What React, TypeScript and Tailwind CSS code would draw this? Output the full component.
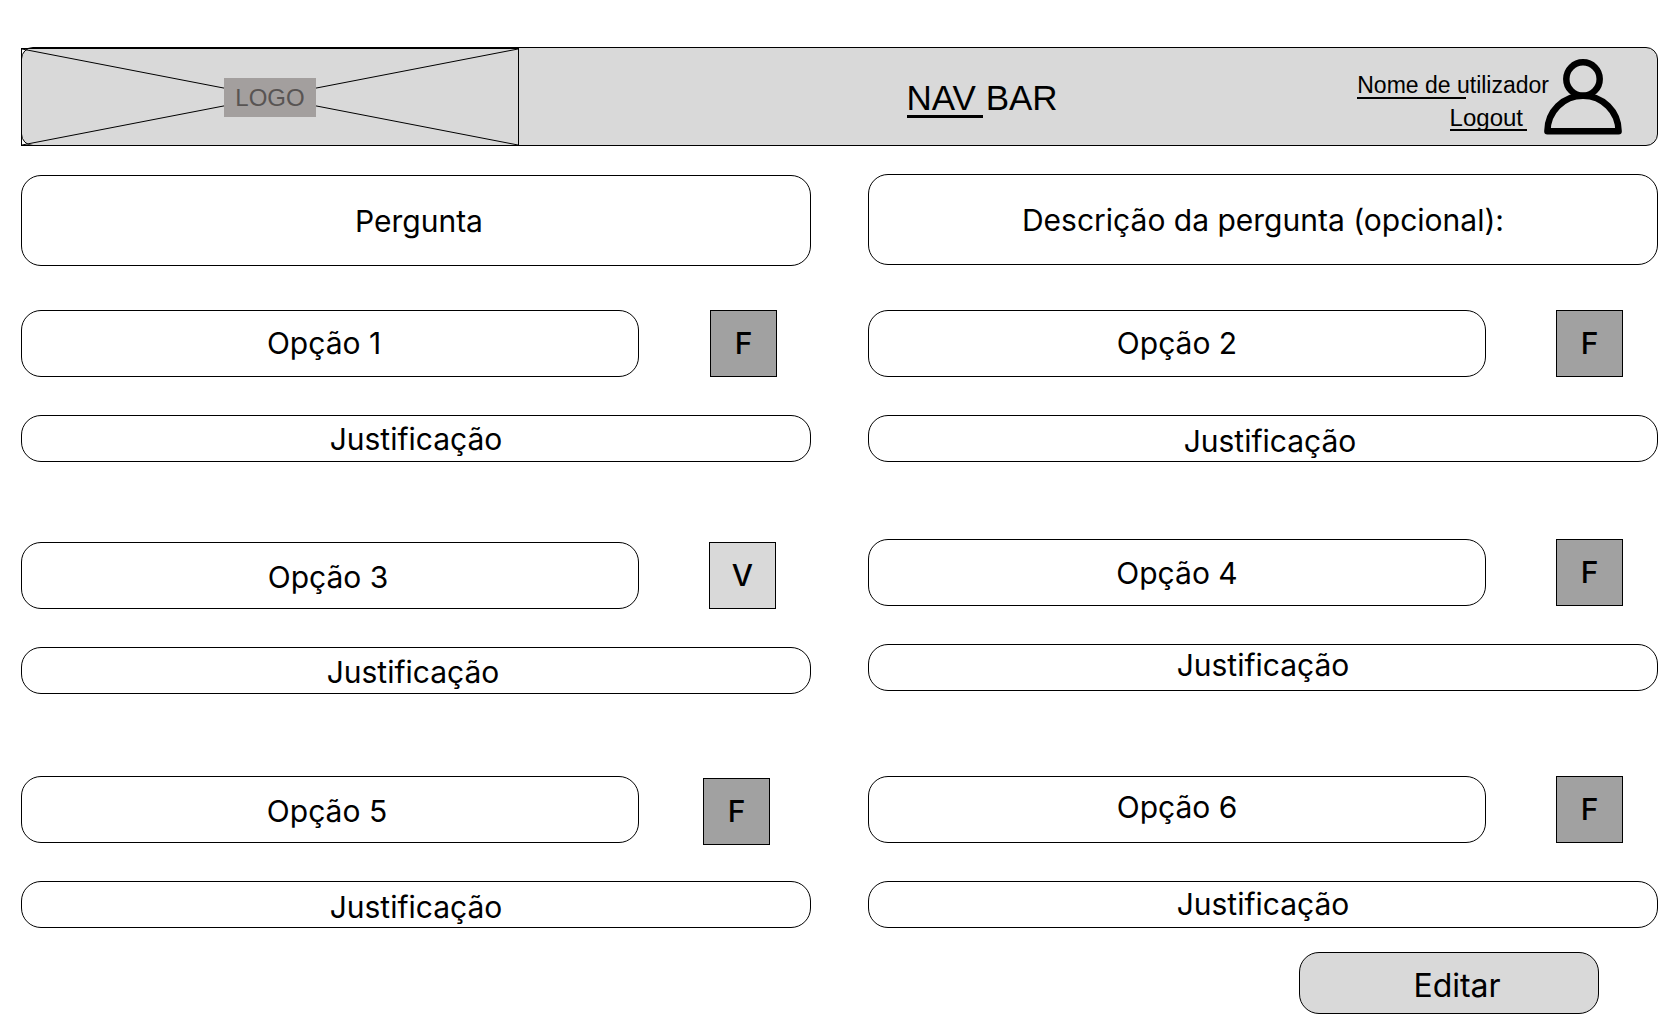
import React from "react";

type Answer = {
  id: number;
  verdict: "V" | "F";
  spacing: string;
  optionText: string;
  noteText: string;
  markSlot: string;
};

const leftAnswers: Answer[] = [
  { id: 1, verdict: "F", spacing: "mt-11", optionText: "pr-3 pb-0.5", noteText: "", markSlot: "pl-[71px]" },
  { id: 3, verdict: "V", spacing: "mt-20", optionText: "pt-0.5 pr-1", noteText: "pt-0.5 pr-1.5", markSlot: "pl-[70px]" },
  { id: 5, verdict: "F", spacing: "mt-[82px]", optionText: "pr-1.5 pt-0.5", noteText: "pt-1", markSlot: "pl-16 pt-0.5" },
];

const rightAnswers: Answer[] = [
  { id: 2, verdict: "F", spacing: "mt-[45px]", optionText: "pb-0.5", noteText: "pt-1 pl-3.5", markSlot: "pl-[70px]" },
  { id: 4, verdict: "F", spacing: "mt-[77px]", optionText: "", noteText: "pb-1.5", markSlot: "pl-[70px]" },
  { id: 6, verdict: "F", spacing: "mt-[85px]", optionText: "pb-1.5", noteText: "pb-0.5", markSlot: "pl-[70px]" },
];

function Field({ className, children }: { className: string; children: React.ReactNode }) {
  return (
    <div className={`flex items-center justify-center rounded-[20px] border border-black bg-white ${className}`}>
      {children}
    </div>
  );
}

function AnswerBlock({ answer }: { answer: Answer }) {
  return (
    <section className={answer.spacing}>
      <div className="flex h-[67px]">
        <Field className={`h-[67px] min-w-0 flex-1 ${answer.optionText}`}>
          <h2>Opção {answer.id}</h2>
        </Field>
        <div className={`w-[172px] shrink-0 ${answer.markSlot}`}>
          <div
            className={`flex size-[67px] items-center justify-center border border-black pb-0.5 font-medium ${
              answer.verdict === "V" ? "bg-[#d9d9d9]" : "bg-[#a1a1a1]"
            }`}
          >
            {answer.verdict}
          </div>
        </div>
      </div>
      <Field className={`mt-[38px] h-[47px] ${answer.noteText}`}>
        <p>Justificação</p>
      </Field>
    </section>
  );
}

function Logo() {
  return (
    <div className="relative -mb-px -ml-px flex w-[498px] shrink items-center justify-center border border-black">
      <svg className="absolute inset-0 h-full w-full" viewBox="0 0 496 96" preserveAspectRatio="none" aria-hidden="true">
        <path d="M0 0 496 96M0 96 496 0" stroke="#000" strokeWidth="1" fill="none" />
      </svg>
      <span className="relative flex h-[39px] w-[92px] items-center justify-center bg-[#a39f9e] pt-0.5 text-2xl text-[#585453]">
        LOGO
      </span>
    </div>
  );
}

function UserIcon() {
  return (
    <svg className="h-[76px] w-[78px] shrink-0" viewBox="0 0 78 76" fill="none" stroke="#000" strokeWidth="6.5" aria-hidden="true">
      <circle cx="39" cy="20" r="16.7" />
      <path d="M3.4 72.3C3.4 52.5 19.3 36.7 39 36.7s35.6 15.8 35.6 35.6Z" strokeLinejoin="round" />
    </svg>
  );
}

export default function App() {
  return (
    <div className="bg-white pr-[22px] pb-2.5 pl-[21px] pt-[47px] font-['Inter',sans-serif] text-[30px] leading-9 text-black">
      <header className="flex h-[99px] rounded-xl border border-black bg-[#d9d9d9] font-['Liberation_Sans',sans-serif]">
        <Logo />
        <div className="flex flex-1 items-center justify-center pt-0.5 pl-[88px]">
          <div className="relative text-[35px] leading-10 whitespace-nowrap">
            NAV BAR
            <span className="absolute bottom-0 left-0 h-[3px] w-[76px] bg-black" />
          </div>
        </div>
        <nav className="flex items-center pr-[35px]">
          <div className="-mr-[5px] flex flex-col items-end pt-2 leading-[34px] whitespace-nowrap">
            <a href="#perfil" className="relative text-[23px]">
              Nome de utilizador
              <span className="absolute bottom-[3px] left-0 h-0.5 w-[109px] bg-black" />
            </a>
            <a href="#logout" className="relative mr-[22px] pr-1 text-2xl">
              Logout
              <span className="absolute bottom-[3px] left-0 h-0.5 w-full bg-black" />
            </a>
          </div>
          <UserIcon />
        </nav>
      </header>

      <main className="grid grid-cols-2 gap-x-[57px]">
        <div className="pt-[29px]">
          <Field className="h-[91px] pl-1.5">
            <h1>Pergunta</h1>
          </Field>
          {leftAnswers.map((answer) => (
            <AnswerBlock key={answer.id} answer={answer} />
          ))}
        </div>
        <div className="pt-7">
          <Field className="h-[91px]">
            <p>Descrição da pergunta (opcional):</p>
          </Field>
          {rightAnswers.map((answer) => (
            <AnswerBlock key={answer.id} answer={answer} />
          ))}
        </div>
      </main>

      <footer className="flex justify-end pt-6 pr-[59px]">
        <button type="button" className="h-[62px] w-[300px] rounded-[20px] border border-black bg-[#d9d9d9] pt-1.5 pl-4 text-[32px]">
          Editar
        </button>
      </footer>
    </div>
  );
}
